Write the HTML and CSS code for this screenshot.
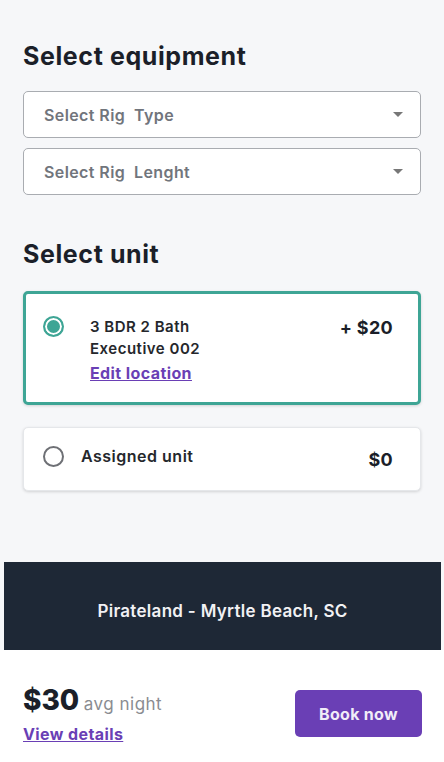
FILE: index.html
```html
<!DOCTYPE html>
<html lang="en">
<head>
   <meta charset="UTF-8">
   <meta name="viewport" content="width=device-width, initial-scale=1.0">
   <title>Select unit</title>
   <link rel="stylesheet" href="styles.css">
</head>
<body>
   <div class="page">
      <div class="content">
         <h2 class="title">Select equipment</h2>
         <div class="selects">
            <div class="select">
               <span>Select Rig&nbsp; Type</span>
               <i class="caret"></i>
            </div>
            <div class="select">
               <span>Select Rig&nbsp; Lenght</span>
               <i class="caret"></i>
            </div>
         </div>

         <h2 class="title unit-title">Select unit</h2>
         <div class="units">
            <div class="unit active">
               <span class="radio"></span>
               <div class="unit-info">
                  <div class="unit-name">3 BDR 2 Bath<br>Executive 002</div>
                  <a href="#" class="link">Edit location</a>
               </div>
               <div class="unit-price">+ $20</div>
            </div>
            <div class="unit plain">
               <span class="radio"></span>
               <div class="unit-info">
                  <div class="unit-name">Assigned unit</div>
               </div>
               <div class="unit-price">$0</div>
            </div>
         </div>
      </div>

      <div class="banner">Pirateland - Myrtle Beach, SC</div>

      <div class="footer">
         <div class="price-box">
            <div class="price"><b>$30</b> <span>avg night</span></div>
            <a href="#" class="link">View details</a>
         </div>
         <button class="book">Book now</button>
      </div>
   </div>
</body>
</html>
```

FILE: styles.css
```css
*{
   margin: 0;
   padding: 0;
   box-sizing: border-box;
}
body{
   background: #f6f7f9;
   font-family: Inter, "Noto Sans", sans-serif;
   color: #1b1f29;
   width: 444px;
   height: 762px;
   overflow: hidden;
}
.page{
   display: flex;
   flex-direction: column;
   height: 762px;
}
.content{
   padding: 41px 23px 0;
}
.title{
   font-size: 25px;
   font-weight: 700;
   letter-spacing: 0.6px;
   line-height: 30px;
}
.selects{
   display: flex;
   flex-direction: column;
   gap: 10px;
   margin-top: 20px;
}
.select{
   height: 47px;
   background: #fff;
   border: 1px solid #a9acb1;
   border-radius: 5px;
   display: flex;
   align-items: center;
   justify-content: space-between;
   padding: 0 17px 0 20px;
   font-size: 16px;
   font-weight: 600;
   letter-spacing: 0.4px;
   color: #71757c;
}
.caret{
   width: 0;
   height: 0;
   border-left: 5px solid transparent;
   border-right: 5px solid transparent;
   border-top: 5px solid #777;
}
.unit-title{
   margin-top: 44px;
}
.units{
   display: flex;
   flex-direction: column;
   gap: 22px;
   margin-top: 22px;
}
.unit{
   background: #fff;
   border-radius: 5px;
   display: flex;
   align-items: flex-start;
   box-shadow: 0 1px 3px rgba(0,0,0,0.15);
}
.unit.active{
   border: 3px solid #3ea595;
   padding: 22px 25px 20px 17px;
   height: 114px;
}
.unit.plain{
   border: 1px solid #e5e7ea;
   padding: 17px 27px 16px 19px;
   height: 64px;
}
.radio{
   width: 21px;
   height: 21px;
   border-radius: 50%;
   border: 2px solid #6e7075;
   flex-shrink: 0;
   margin-top: 1px;
}
.unit.active .radio{
   border-color: #3ea595;
   background: #3ea595;
   box-shadow: inset 0 0 0 2px #fff;
   margin-top: 0;
}
.unit-info{
   flex: 1;
   margin-left: 26px;
}
.unit.plain .unit-info{
   margin-left: 17px;
}
.unit-name{
   font-size: 15px;
   font-weight: 600;
   line-height: 22px;
   letter-spacing: 0.5px;
   color: #25272c;
}
.unit.plain .unit-name{
   font-size: 16px;
}
.link{
   color: #6a3fb5;
   font-weight: 700;
   text-decoration: underline;
   font-size: 16px;
   letter-spacing: 0.4px;
}
.unit .link{
   display: inline-block;
   margin-top: 3px;
}
.unit-price{
   font-size: 18px;
   font-weight: 700;
   margin-top: 1px;
   letter-spacing: 0.3px;
}
.unit.plain .unit-price{
   margin-top: 4px;
}
.banner{
   margin: auto 3px 0 4px;
   height: 88px;
   background: #1e2836;
   color: #f1f1f4;
   font-size: 17px;
   font-weight: 600;
   letter-spacing: 0.3px;
   display: flex;
   align-items: center;
   justify-content: center;
   padding-top: 10px;
}
.footer{
   height: 112px;
   background: #fff;
   display: flex;
   justify-content: space-between;
   align-items: center;
   padding: 15px 22px 0 23px;
}
.price b{
   font-size: 28px;
   font-weight: 800;
}
.price span{
   font-size: 17px;
   color: #8a8c91;
   letter-spacing: 0.5px;
}
.price-box .link{
   display: inline-block;
   margin-top: 7px;
}
.book{
   width: 127px;
   height: 47px;
   border: 0;
   border-radius: 5px;
   background: #6a3fb5;
   color: #f1edf8;
   font-family: inherit;
   font-size: 16px;
   font-weight: 700;
   letter-spacing: 0.3px;
}
```
